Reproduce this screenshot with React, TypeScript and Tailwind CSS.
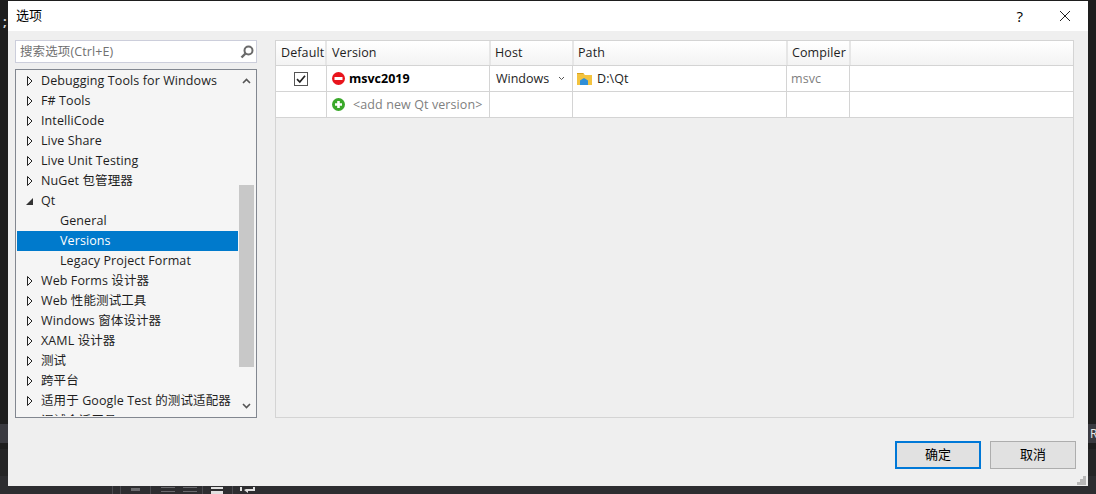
const rows = [
  { label: "Debugging Tools for Windows", arrow: "closed" },
  { label: "F# Tools", arrow: "closed" },
  { label: "IntelliCode", arrow: "closed" },
  { label: "Live Share", arrow: "closed" },
  { label: "Live Unit Testing", arrow: "closed" },
  { label: "NuGet 包管理器", arrow: "closed" },
  { label: "Qt", arrow: "open" },
  { label: "General", arrow: "none" },
  { label: "Versions", arrow: "none", selected: true },
  { label: "Legacy Project Format", arrow: "none" },
  { label: "Web Forms 设计器", arrow: "closed" },
  { label: "Web 性能测试工具", arrow: "closed" },
  { label: "Windows 窗体设计器", arrow: "closed" },
  { label: "XAML 设计器", arrow: "closed" },
  { label: "测试", arrow: "closed" },
  { label: "跨平台", arrow: "closed" },
  { label: "适用于 Google Test 的测试适配器", arrow: "closed" },
  { label: "调试会话工具", arrow: "closed" },
];

function Arrow({ kind }: { kind: string }) {
  if (kind === "open") {
    return (
      <svg width="7" height="7" viewBox="0 0 7 7" className="ml-[9px] mr-[8px] shrink-0">
        <path d="M7 0V7H0Z" fill="#333" />
      </svg>
    );
  }
  if (kind === "closed") {
    return (
      <svg width="6" height="10" viewBox="0 0 6 10" className="ml-[10px] mr-[8px] shrink-0">
        <path d="M0.5 0.5L5 5L0.5 9.5Z" fill="none" stroke="#222" />
      </svg>
    );
  }
  return <span className="w-[43px] shrink-0" />;
}

function TreeRow({ label, arrow, selected }: { label: string; arrow: string; selected?: boolean }) {
  return (
    <div
      className={`h-5 shrink-0 flex items-center whitespace-nowrap ${selected ? "bg-[#007acc] text-white" : "text-[#1e1e1e]"}`}
    >
      <Arrow kind={arrow} />
      <span>{label}</span>
    </div>
  );
}

function Scrollbar() {
  return (
    <div className="w-[15px] shrink-0 ml-px mr-px flex flex-col">
      <div className="h-[114px] shrink-0 pt-[7px] flex justify-center">
        <svg width="9" height="6" viewBox="0 0 9 6">
          <path d="M1 5L4.5 1.5L8 5" fill="none" stroke="#555" strokeWidth="1.6" />
        </svg>
      </div>
      <div className="h-[182px] shrink-0 bg-[#c8c8c8]" />
      <div className="flex-1 flex justify-center items-end pb-[7px]">
        <svg width="9" height="6" viewBox="0 0 9 6">
          <path d="M1 1L4.5 4.5L8 1" fill="none" stroke="#555" strokeWidth="1.6" />
        </svg>
      </div>
    </div>
  );
}

function Header({ w, label, pad = "pl-[5px]" }: { w: string; label: string; pad?: string }) {
  return (
    <div
      className={`${w} h-full shrink-0 flex items-center pt-px ${pad} bg-gradient-to-b from-[#ffffff] to-[#f3f3f3] border-r-2 border-[#e6e6e6]`}
    >
      {label}
    </div>
  );
}

function Cell({ w, children }: { w: string; children?: React.ReactNode }) {
  return <div className={`${w} h-full shrink-0 flex items-center border-r border-[#d4d4d4]`}>{children}</div>;
}

function VersionTable() {
  return (
    <div className="flex-1 h-[378px] border border-[#d4d4d4] bg-[#efefef] text-[#1e1e1e] flex flex-col">
      <div className="h-[25px] shrink-0 flex border-b border-[#d4d4d4]">
        <Header w="w-[51px]" label="Default" />
        <Header w="w-[164px]" label="Version" />
        <Header w="w-[83px]" label="Host" pad="pl-[4px]" />
        <Header w="w-[214px]" label="Path" pad="pl-[4px]" />
        <Header w="w-[63px]" label="Compiler" pad="pl-[4px]" />
        <div className="flex-1 bg-gradient-to-b from-[#ffffff] to-[#f3f3f3]" />
      </div>
      <div className="h-[26px] shrink-0 flex bg-white border-b border-[#d4d4d4]">
        <Cell w="w-[51px]">
          <div className="ml-[18px] w-[14px] h-[14px] border border-[#555] flex items-center justify-center">
            <svg width="12" height="12" viewBox="0 0 12 12">
              <path d="M2 6.2L4.8 9L10 2.8" fill="none" stroke="#222" strokeWidth="1.7" />
            </svg>
          </div>
        </Cell>
        <Cell w="w-[163px]">
          <svg width="13" height="13" viewBox="0 0 13 13" className="ml-[5px] mr-[4px]">
            <circle cx="6.5" cy="6.5" r="6.5" fill="#e8141c" />
            <rect x="2.5" y="5" width="8" height="3" fill="#fff" />
          </svg>
          <span className="font-bold text-black pt-px tracking-normal">msvc2019</span>
        </Cell>
        <Cell w="w-[83px]">
          <span className="ml-[6px] pt-px tracking-normal">Windows</span>
          <svg width="7" height="5" viewBox="0 0 7 5" className="ml-[9px]">
            <path d="M1 1L3.5 3.5L6 1" fill="none" stroke="#555" />
          </svg>
        </Cell>
        <Cell w="w-[214px]">
          <svg width="15" height="14" viewBox="0 0 15 14" className="ml-[4px] mr-[5px]">
            <path d="M0 1H6L8 3H15V13H0Z" fill="#f3c33f" />
            <path d="M0 1H6L7 2H0Z" fill="#d9a21f" />
            <path d="M3 13V8.5L7 6L11 8.5V13Z" fill="#2f8fd8" />
          </svg>
          <span className="pt-px">D:\Qt</span>
        </Cell>
        <Cell w="w-[63px]">
          <span className="ml-[4px] pt-px text-[#808080]">msvc</span>
        </Cell>
        <div className="flex-1" />
      </div>
      <div className="h-[26px] shrink-0 flex bg-white border-b border-[#d4d4d4]">
        <Cell w="w-[51px]" />
        <Cell w="w-[163px]">
          <svg width="13" height="13" viewBox="0 0 13 13" className="ml-[5px] mr-[8px]">
            <circle cx="6.5" cy="6.5" r="6.5" fill="#3aa82a" />
            <path d="M6.5 3V10M3 6.5H10" stroke="#fff" strokeWidth="2.6" />
          </svg>
          <span className="pt-px text-[#808080]">&lt;add new Qt version&gt;</span>
        </Cell>
        <Cell w="w-[83px]" />
        <Cell w="w-[214px]" />
        <Cell w="w-[63px]" />
        <div className="flex-1" />
      </div>
    </div>
  );
}

export default function App() {
  return (
    <div
      className="w-[1096px] h-[494px] overflow-hidden bg-[#2d2d30] flex flex-col text-[13px]"
      style={{ fontFamily: '"Open Sans", "Noto Sans CJK SC", sans-serif' }}
    >
      <div className="h-[486px] shrink-0 flex bg-[#1e1e1e]">
        {/* editor behind the dialog, left edge */}
        <div className="w-2 shrink-0 flex flex-col overflow-hidden">
          <div className="h-[424px] shrink-0 pt-[13px] pl-[3px] text-[#d4d4d4] font-bold leading-[16px]">;</div>
          <div className="h-[19px] shrink-0 bg-[#3a3a40]" />
          <div className="h-[6px] shrink-0 bg-[#1e1e1e]" />
          <div className="h-[27px] shrink-0 bg-[#252526]" />
          <div className="flex-1 bg-[#2d2d30]" />
        </div>

        <div className="relative w-[1080px] shrink-0 mt-px flex flex-col bg-[#efefef]">
          <div className="h-[30px] shrink-0 bg-white flex items-center pl-2 text-black">
            <span>选项</span>
            <span className="ml-auto mr-[36px] text-[15px]">?</span>
            <svg width="12" height="12" viewBox="0 0 12 12" className="mr-[17px]">
              <path d="M1 1L11 11M11 1L1 11" stroke="#222" strokeWidth="1" />
            </svg>
          </div>
          <div className="flex-1 flex pl-[7px] pr-[14px] pt-[9px] gap-[18px] text-[12.5px] tracking-[0.1px]">
            <div className="w-[242px] shrink-0 flex flex-col gap-[6px]">
              <div className="h-[23px] shrink-0 border border-[#ccceDB] bg-white flex items-center pl-1 pr-[2px] text-[#717171]">
                <span className="pt-px">搜索选项(Ctrl+E)</span>
                <svg width="14" height="14" viewBox="0 0 14 14" className="ml-auto">
                  <circle cx="8.5" cy="5.5" r="4" fill="none" stroke="#6a6a6a" strokeWidth="2" />
                  <path d="M5.5 8.5L1.5 12.5" stroke="#6a6a6a" strokeWidth="2.4" />
                </svg>
              </div>
              <div className="h-[349px] shrink-0 border border-[#828790] bg-[#f5f5f5] p-px flex overflow-hidden">
                <div className="flex-1 min-w-0 flex flex-col overflow-hidden">
                  {rows.map((r) => (
                    <TreeRow key={r.label} label={r.label} arrow={r.arrow} selected={r.selected} />
                  ))}
                </div>
                <Scrollbar />
              </div>
            </div>
            <VersionTable />
          </div>
          <div className="h-[45px] shrink-0 flex gap-[9px] justify-end pr-3 pb-[17px] text-black">
            <button className="w-[86px] h-[28px] border-2 border-[#0078d7] bg-[#e1e1e1]">确定</button>
            <button className="w-[86px] h-[28px] border border-[#adadad] bg-[#e1e1e1]">取消</button>
          </div>
          {/* resize grip */}
          <svg width="9" height="9" viewBox="0 0 9 9" className="absolute right-[2px] bottom-[1px]" fill="#b8b8b8">
            <rect x="6" y="0" width="3" height="3" />
            <rect x="3" y="3" width="3" height="3" />
            <rect x="6" y="3" width="3" height="3" />
            <rect x="0" y="6" width="3" height="3" />
            <rect x="3" y="6" width="3" height="3" />
            <rect x="6" y="6" width="3" height="3" />
          </svg>
        </div>

        {/* editor behind the dialog, right edge */}
        <div className="w-2 shrink-0 flex flex-col overflow-hidden">
          <div className="h-[424px] shrink-0" />
          <div className="h-[19px] shrink-0 bg-[#3a3a40] pl-[2px] text-[#e8e8e8] text-[12px] leading-[19px]">R</div>
          <div className="h-[6px] shrink-0 bg-[#1e1e1e]" />
          <div className="h-[27px] shrink-0 bg-[#252526]" />
          <div className="flex-1 bg-[#2d2d30]" />
        </div>
      </div>

      {/* status bar icons peeking out under the dialog */}
      <div className="h-2 shrink-0 pl-[100px]">
        <svg width="160" height="8" viewBox="0 0 160 8">
          <g fill="#4a4a4f">
            <rect x="12" y="0" width="1" height="8" />
            <rect x="20" y="0" width="1" height="8" />
            <rect x="50" y="0" width="1" height="8" />
            <rect x="102" y="0" width="1" height="8" />
            <rect x="132" y="0" width="1" height="8" />
          </g>
          <g fill="#6a6a6e">
            <rect x="31" y="2" width="9" height="3" />
            <rect x="61" y="1" width="14" height="1" />
            <rect x="61" y="5" width="14" height="1" />
            <rect x="83" y="1" width="14" height="1" />
            <rect x="83" y="5" width="14" height="1" />
          </g>
          <g fill="#e0e0e0">
            <rect x="111" y="1" width="12" height="2" />
            <rect x="111" y="5" width="12" height="3" />
            <rect x="140" y="1" width="2" height="4" />
            <path d="M146 3H153V1H155V5H148V7L144 4Z" />
          </g>
        </svg>
      </div>
    </div>
  );
}
